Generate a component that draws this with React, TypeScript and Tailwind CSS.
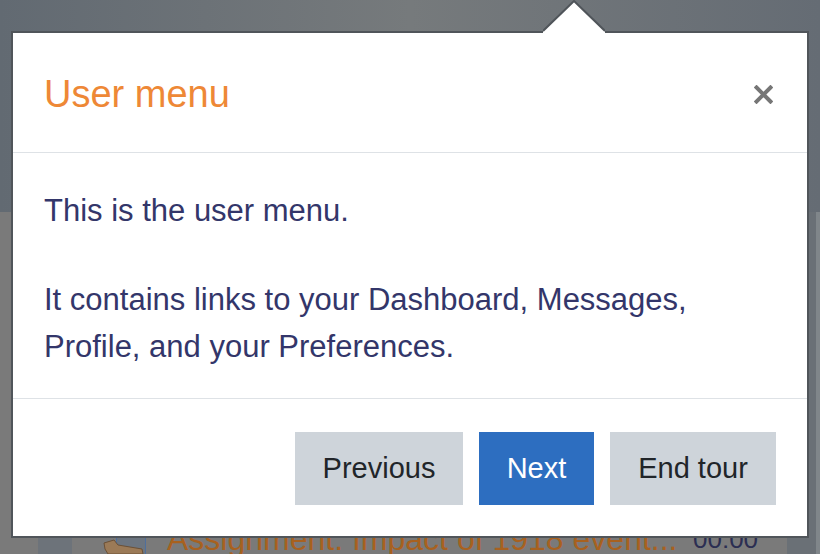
export default function App() {
  return (
    <div
      className="relative w-[820px] h-[554px] overflow-hidden bg-[#697078]"
      style={{ fontFamily: '"Liberation Sans", Arial, sans-serif' }}
    >
      {/* dimmed page behind the tour step */}
      <div className="flex flex-col h-full">
        <div className="h-[212px] bg-gradient-to-r from-[#626a72] via-[#767a7c] to-[#656c74]" />
        <div className="flex-1 flex">
          <div className="flex-1 flex flex-col bg-[#7a7a7a]">
            <div className="flex-1 flex">
              <div className="w-[38px]" />
              <div className="w-[34px] bg-[#6d737a]" />
            </div>
            <div className="h-[17px] flex items-start">
              <div className="w-[38px]" />
              <div className="w-[34px] h-full bg-[#6d737a]" />
              <div className="relative w-[74px] h-full flex justify-end">
                <div className="w-[30px] h-full border-x border-[#4f6f9c] bg-[#6c7580]" />
                <svg className="absolute left-[30px] top-[2px]" width="42" height="15" viewBox="0 0 42 15">
                  <path d="M2 4 L12 1 L16 6 L40 10 L41 15 L6 15 L3 10 Z" fill="#9b7a57" stroke="#6b5036" strokeWidth="1" />
                </svg>
              </div>
              <div className="w-[21px]" />
              <div className="-mt-[16px] text-[32px] leading-[36px] text-[#a8611f] whitespace-nowrap w-[526px]">
                Assignment: Impact of 1918 event...
              </div>
              <div className="-mt-[16px] text-[26px] leading-[36px] text-[#2b2e52]">00:00</div>
            </div>
          </div>
          <div className="w-[33px] bg-[#6a7076] border-r-[4px] border-[#80868a]" />
        </div>
      </div>

      {/* tour popover */}
      <div className="absolute left-[11px] top-[31px] w-[798px] h-[507px] bg-white border-2 border-[#50555a] flex flex-col">
        <div className="h-[120px] flex items-center justify-between pl-[31px] pr-[34px] pt-[3px] border-b border-[#dee2e6]">
          <h3 className="text-[38px] leading-[46px] text-[#ee8836] font-normal">User menu</h3>
          <button type="button" className="w-[20px] h-[20px] flex items-center justify-center">
            <svg width="19" height="19" viewBox="0 0 19 19">
              <path d="M2.5 2.5 L16.5 16.5 M16.5 2.5 L2.5 16.5" stroke="#767676" strokeWidth="4" strokeLinecap="square" />
            </svg>
          </button>
        </div>
        <div className="h-[246px] pl-[31px] pr-[31px] pt-[34px] text-[31px] leading-[47px] text-[#33366a] border-b border-[#dee2e6]">
          <p className="mb-[42px]">This is the user menu.</p>
          <p>It contains links to your Dashboard, Messages, Profile, and your Preferences.</p>
        </div>
        <div className="flex-1 flex items-center justify-end gap-[16px] pr-[31px] pt-[1px]">
          <button type="button" className="h-[73px] w-[168px] bg-[#ced4da] text-[#212529] text-[29px] pt-[2px]">
            Previous
          </button>
          <button type="button" className="h-[73px] w-[115px] bg-[#2d6ec0] text-white text-[29px] pt-[2px]">
            Next
          </button>
          <button type="button" className="h-[73px] w-[166px] bg-[#ced4da] text-[#212529] text-[29px] pt-[2px]">
            End tour
          </button>
        </div>
      </div>

      {/* popover arrow */}
      <svg className="absolute left-[543px] top-0" width="62" height="34" viewBox="0 0 62 34">
        <path d="M0 33 L0 31 L31 1 L62 31 L62 33 Z" fill="#ffffff" />
        <path d="M0 31 L31 1 L62 31" fill="none" stroke="#50555a" strokeWidth="2" />
      </svg>
    </div>
  );
}
